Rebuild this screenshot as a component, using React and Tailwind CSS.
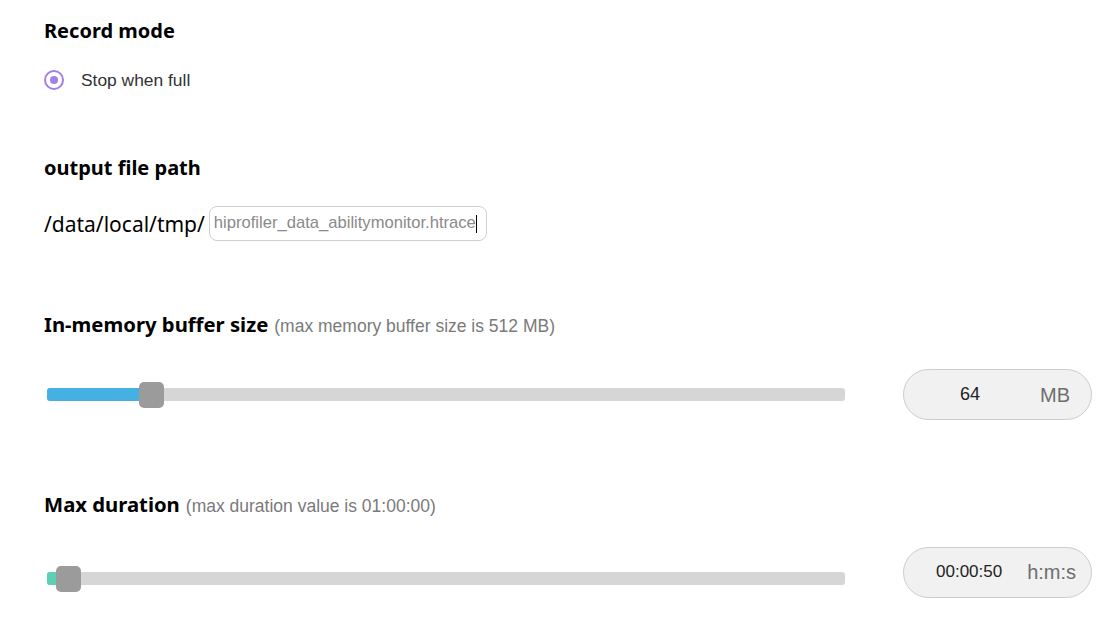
export default function App() {
  const heading = { fontFamily: '"Noto Sans", sans-serif' };
  const arial = { fontFamily: '"Liberation Sans", Arial, sans-serif' };
  return (
    <div className="w-[1113px] h-[633px] bg-white overflow-hidden pl-[44px] pr-[21px]">
      <div style={heading} className="pt-[17px] text-[20px] leading-[28px] font-bold text-black">Record mode</div>
      <div className="mt-[23px] flex items-center h-[24px]">
        <div className="w-[20px] h-[20px] rounded-full border-2 border-[#a47fe4] flex items-center justify-center">
          <div className="w-[8px] h-[8px] rounded-full bg-[#a47fe4]" />
        </div>
        <span style={arial} className="ml-[17px] text-[17.4px] leading-[24px] text-[#333]">Stop when full</span>
      </div>

      <div style={heading} className="mt-[62px] text-[20px] leading-[28px] font-bold text-black">output file path</div>
      <div className="mt-[24px] flex items-center">
        <span style={heading} className="text-[21px] leading-[30px] text-black">/data/local/tmp/</span>
        <div style={arial} className="ml-[4px] w-[278px] h-[35px] rounded-[8px] border border-[#cfcfcf] flex items-center px-[4px] text-[16.6px] text-[#8a8a8a]">
          hiprofiler_data_abilitymonitor.htrace<span className="w-px h-[18px] bg-black" />
        </div>
      </div>

      <div className="mt-[69px] flex items-baseline">
        <span style={heading} className="text-[20.3px] leading-[28px] font-bold text-black">In-memory buffer size</span>
        <span style={arial} className="ml-[6px] text-[17.5px] text-[#7a7a7a]">(max memory buffer size is 512 MB)</span>
      </div>
      <div className="mt-[30px] flex items-center h-[51px]">
        <div className="relative ml-[3px] w-[798px] h-[13px] rounded-[3px] bg-[#d6d6d6]">
          <div className="absolute left-0 top-0 h-full w-[104px] rounded-[3px] bg-[#46b0e3]" />
          <div className="absolute left-[92px] top-[-6px] w-[25px] h-[26px] rounded-[5px] bg-[#9b9b9b]" />
        </div>
        <div className="ml-auto w-[189px] h-[51px] rounded-full border border-[#cccccc] bg-[#f1f1f1] flex items-center">
          <span style={arial} className="ml-[56px] text-[18px] text-[#222]">64</span>
          <span style={arial} className="ml-[60px] text-[20px] text-[#6e6e6e]">MB</span>
        </div>
      </div>

      <div className="mt-[70px] flex items-baseline">
        <span style={heading} className="text-[20.3px] leading-[28px] font-bold text-black">Max duration</span>
        <span style={arial} className="ml-[6px] text-[17.5px] text-[#7a7a7a]">(max duration value is 01:00:00)</span>
      </div>
      <div className="mt-[33px] flex items-center h-[51px]">
        <div className="relative ml-[3px] w-[798px] h-[13px] rounded-[3px] bg-[#d6d6d6]">
          <div className="absolute left-0 top-0 h-full w-[14px] rounded-[3px] bg-[#5ccfb4]" />
          <div className="absolute left-[9px] top-[-6px] w-[25px] h-[26px] rounded-[5px] bg-[#9b9b9b]" />
        </div>
        <div className="ml-auto mb-[12px] w-[189px] h-[51px] shrink-0 rounded-full border border-[#cccccc] bg-[#f1f1f1] flex items-center">
          <span style={arial} className="ml-[32px] text-[17px] text-[#222]">00:00:50</span>
          <span style={arial} className="ml-[25px] text-[20px] text-[#6e6e6e]">h:m:s</span>
        </div>
      </div>
    </div>
  );
}
